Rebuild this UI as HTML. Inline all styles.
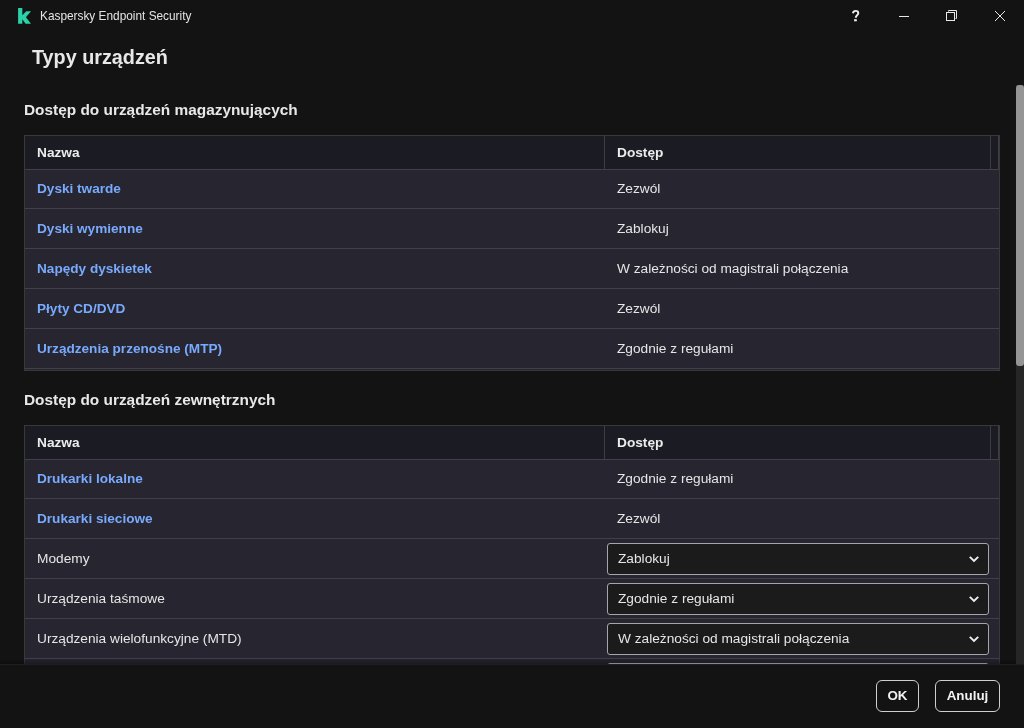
<!DOCTYPE html>
<html><head><meta charset="utf-8">
<style>
*{margin:0;padding:0;box-sizing:border-box}
html,body{width:1024px;height:728px;overflow:hidden;-webkit-font-smoothing:antialiased;background:#131313;font-family:"Liberation Sans",sans-serif;color:#e6e6e6}
.abs{position:absolute}
.t{position:absolute;white-space:nowrap;line-height:1;will-change:transform}
.hd{font-size:13.7px;font-weight:bold;color:#ececec}
.lk{color:#79aafd;font-weight:bold;font-size:13.6px}
.vl{font-size:13.7px;color:#e6e6e6}
.dd{position:absolute;left:607px;width:382px;height:32px;border:1px solid #a5a5aa;border-radius:3px;background:#1b1b1b}
.btn{position:absolute;will-change:transform;top:680px;height:32px;border:1px solid #cfcfcf;border-radius:6px;background:#131313;color:#f2f2f2;font-weight:bold;font-size:13.4px;text-align:center;line-height:30px}
</style></head><body>
<svg class="abs" style="left:0;top:0" width="40" height="30" viewBox="0 0 40 30"><path d="M18.1 8H22.3V15.2L26.2 11.2H31L25.9 17.3L31 23.8H25.6L22.3 19.3V23.8H18.1Z" fill="#2ad2a8"/></svg>
<div class="t" style="left:40px;top:11px;font-size:11.85px;color:#e4e4e4">Kaspersky Endpoint Security</div>
<svg class="abs" style="left:840px;top:0" width="184" height="32" viewBox="840 0 184 32">
 <path d="M852.9 13.2C853.2 11.6 854.3 10.9 855.6 10.9C857.2 10.9 858.3 11.9 858.3 13.2C858.3 14.9 856.2 15.4 855.6 17.8" fill="none" stroke="#f0f0f0" stroke-width="1.9"/>
 <rect x="854.1" y="19.2" width="2.7" height="2.1" fill="#f0f0f0"/>
 <rect x="899" y="16" width="10" height="1" fill="#e8e8e8"/>
 <path d="M948.5 11.5V10.5H956.5V18.5H955.5" fill="none" stroke="#e8e8e8" stroke-width="1"/>
 <rect x="946.5" y="12.5" width="8" height="8" fill="none" stroke="#e8e8e8" stroke-width="1"/>
 <path d="M995 11L1005 21M1005 11L995 21" stroke="#e8e8e8" stroke-width="1"/>
</svg>
<div class="t" style="left:32px;top:48px;font-size:19.8px;font-weight:bold;color:#e8e8e8">Typy urządzeń</div>
<div class="t" style="left:24px;top:102px;font-size:15.4px;font-weight:bold;color:#e8e8e8">Dostęp do urządzeń magazynujących</div>
<div class="abs" style="left:24px;top:135px;width:976px;height:236px;border:1px solid #393939;background:#262530"></div>
<div class="abs" style="left:25px;top:136px;width:974px;height:33px;background:#1b1b24"></div>
<div class="abs" style="left:25px;top:169px;width:974px;height:1px;background:#403f4a"></div>
<div class="abs" style="left:604px;top:136px;width:1px;height:33px;background:#3d3c47"></div>
<div class="abs" style="left:990px;top:136px;width:1px;height:33px;background:#3d3c47"></div>
<div class="abs" style="left:998px;top:136px;width:1px;height:33px;background:#3d3c47"></div>
<div class="t hd" style="left:37px;top:146px">Nazwa</div>
<div class="t hd" style="left:617px;top:146px">Dostęp</div>
<div class="abs" style="left:25px;top:208px;width:974px;height:1px;background:#403f4a"></div>
<div class="t lk" style="left:37px;top:182px">Dyski twarde</div>
<div class="t vl" style="left:617px;top:182px">Zezwól</div>
<div class="abs" style="left:25px;top:248px;width:974px;height:1px;background:#403f4a"></div>
<div class="t lk" style="left:37px;top:222px">Dyski wymienne</div>
<div class="t vl" style="left:617px;top:222px">Zablokuj</div>
<div class="abs" style="left:25px;top:288px;width:974px;height:1px;background:#403f4a"></div>
<div class="t lk" style="left:37px;top:262px">Napędy dyskietek</div>
<div class="t vl" style="left:617px;top:262px">W zależności od magistrali połączenia</div>
<div class="abs" style="left:25px;top:328px;width:974px;height:1px;background:#403f4a"></div>
<div class="t lk" style="left:37px;top:302px">Płyty CD/DVD</div>
<div class="t vl" style="left:617px;top:302px">Zezwól</div>
<div class="abs" style="left:25px;top:368px;width:974px;height:1px;background:#403f4a"></div>
<div class="t lk" style="left:37px;top:342px">Urządzenia przenośne (MTP)</div>
<div class="t vl" style="left:617px;top:342px">Zgodnie z regułami</div>
<div class="t" style="left:24px;top:392px;font-size:15.4px;font-weight:bold;color:#e8e8e8">Dostęp do urządzeń zewnętrznych</div>
<div class="abs" style="left:24px;top:425px;width:976px;height:300px;border:1px solid #393939;background:#262530"></div>
<div class="abs" style="left:25px;top:426px;width:974px;height:33px;background:#1b1b24"></div>
<div class="abs" style="left:25px;top:459px;width:974px;height:1px;background:#403f4a"></div>
<div class="abs" style="left:604px;top:426px;width:1px;height:33px;background:#3d3c47"></div>
<div class="abs" style="left:990px;top:426px;width:1px;height:33px;background:#3d3c47"></div>
<div class="abs" style="left:998px;top:426px;width:1px;height:33px;background:#3d3c47"></div>
<div class="t hd" style="left:37px;top:436px">Nazwa</div>
<div class="t hd" style="left:617px;top:436px">Dostęp</div>
<div class="abs" style="left:25px;top:498px;width:974px;height:1px;background:#403f4a"></div>
<div class="t lk" style="left:37px;top:472px">Drukarki lokalne</div>
<div class="t vl" style="left:617px;top:472px">Zgodnie z regułami</div>
<div class="abs" style="left:25px;top:538px;width:974px;height:1px;background:#403f4a"></div>
<div class="t lk" style="left:37px;top:512px">Drukarki sieciowe</div>
<div class="t vl" style="left:617px;top:512px">Zezwól</div>
<div class="abs" style="left:25px;top:578px;width:974px;height:1px;background:#403f4a"></div>
<div class="t vl" style="left:37px;top:552px">Modemy</div>
<div class="dd" style="top:543px"><div class="t vl" style="left:10px;top:8px">Zablokuj</div><svg class="abs" style="left:360px;top:11px" width="12" height="9" viewBox="0 0 12 9"><path d="M1.8 1.8L6 6L10.2 1.8" fill="none" stroke="#f0f0f0" stroke-width="1.9" stroke-linecap="butt"/></svg></div>
<div class="abs" style="left:25px;top:618px;width:974px;height:1px;background:#403f4a"></div>
<div class="t vl" style="left:37px;top:592px">Urządzenia taśmowe</div>
<div class="dd" style="top:583px"><div class="t vl" style="left:10px;top:8px">Zgodnie z regułami</div><svg class="abs" style="left:360px;top:11px" width="12" height="9" viewBox="0 0 12 9"><path d="M1.8 1.8L6 6L10.2 1.8" fill="none" stroke="#f0f0f0" stroke-width="1.9" stroke-linecap="butt"/></svg></div>
<div class="abs" style="left:25px;top:658px;width:974px;height:1px;background:#403f4a"></div>
<div class="t vl" style="left:37px;top:632px">Urządzenia wielofunkcyjne (MTD)</div>
<div class="dd" style="top:623px"><div class="t vl" style="left:10px;top:8px">W zależności od magistrali połączenia</div><svg class="abs" style="left:360px;top:11px" width="12" height="9" viewBox="0 0 12 9"><path d="M1.8 1.8L6 6L10.2 1.8" fill="none" stroke="#f0f0f0" stroke-width="1.9" stroke-linecap="butt"/></svg></div>
<div class="abs" style="left:0;top:658px;width:1016px;height:6px;background:linear-gradient(rgba(0,0,0,0),rgba(0,0,0,0.3))"></div>
<div class="abs" style="left:607px;top:663px;width:382px;height:32px;border:1px solid #8a8a8e;border-radius:3px;background:#1b1b1b"></div>
<div class="abs" style="left:1016px;top:85px;width:8px;height:579px;background:#262626"></div>
<div class="abs" style="left:1016px;top:85px;width:8px;height:281px;background:#959595;border-radius:3px 3px 3px 3px"></div>
<div class="abs" style="left:0;top:664px;width:1024px;height:1px;background:#1f1f1f"></div>
<div class="abs" style="left:0;top:665px;width:1024px;height:63px;background:#131313"></div>
<div class="btn" style="left:876px;width:43px">OK</div>
<div class="btn" style="left:935px;width:65px">Anuluj</div>
</body></html>
